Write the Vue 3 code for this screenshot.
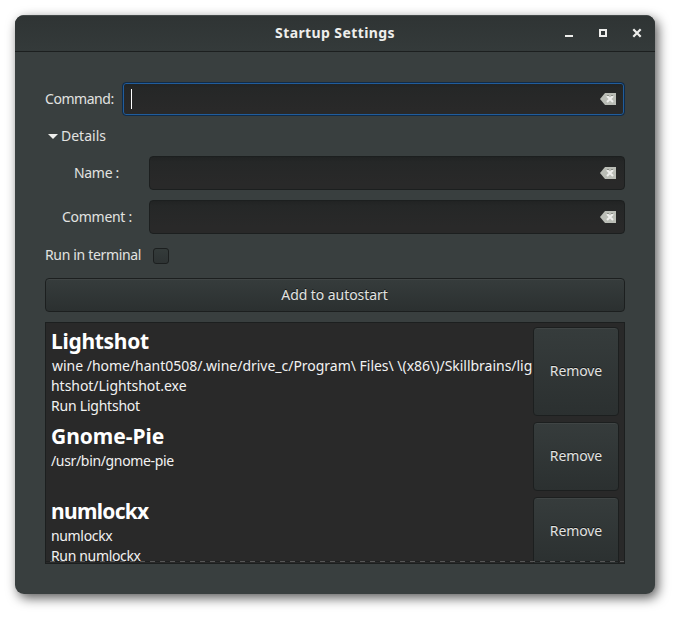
<script setup>
import { ref } from 'vue'

const command = ref('')
const name = ref('')
const comment = ref('')
const terminal = ref(false)

const entries = [
  { id: 'lightshot', title: 'Lightshot', lines: ['wine /home/hant0508/.wine/drive_c/Program\\ Files\\ \\(x86\\)/Skillbrains/lig', 'htshot/Lightshot.exe', 'Run Lightshot'] },
  { id: 'pie', title: 'Gnome-Pie', lines: ['/usr/bin/gnome-pie', ''] },
  { id: 'numlock', title: 'numlockx', lines: ['numlockx', 'Run numlockx'] },
]
</script>

<template>
  <div class="desktop">
    <main class="window">
      <header class="titlebar">
        <h1>Startup Settings</h1>
        <div class="controls">
          <svg viewBox="0 0 10 10"><path d="M1 7h8v2H1z" /></svg>
          <svg viewBox="0 0 10 10"><path fill-rule="evenodd" d="M1 1h8v8H1zM3 3v4h4V3z" /></svg>
          <svg viewBox="0 0 10 10"><path d="M1.3 1.3l7.4 7.4M8.7 1.3L1.3 8.7" fill="none" stroke="#eeeeec" stroke-width="2.2" /></svg>
        </div>
      </header>
      <section class="content">
        <div class="row command">
          <label><span class="t-command">Command:</span></label>
          <div class="entry focused">
            <i class="caret"></i>
            <input v-model="command" type="text" />
            <svg class="clear" viewBox="0 0 16 12"><path d="M5 0h11v12H5L0 6z" fill="#babdb6" /><path d="M7 3l6 6M13 3L7 9" stroke="#eeeeec" stroke-width="2" /><path d="M7 2.5h2M11 2.5h2" stroke="#8b8e88" /></svg>
          </div>
        </div>
        <div class="details">
          <svg viewBox="0 0 10 5"><path d="M0 0h10L5 5z" /></svg>
          <span class="t-details">Details</span>
        </div>
        <div class="row sub">
          <label class="name"><span class="t-name">Name :</span></label>
          <div class="entry">
            <input v-model="name" type="text" />
            <svg class="clear" viewBox="0 0 16 12"><path d="M5 0h11v12H5L0 6z" fill="#babdb6" /><path d="M7 3l6 6M13 3L7 9" stroke="#eeeeec" stroke-width="2" /><path d="M7 2.5h2M11 2.5h2" stroke="#8b8e88" /></svg>
          </div>
        </div>
        <div class="row sub second">
          <label><span class="t-comment">Comment :</span></label>
          <div class="entry">
            <input v-model="comment" type="text" />
            <svg class="clear" viewBox="0 0 16 12"><path d="M5 0h11v12H5L0 6z" fill="#babdb6" /><path d="M7 3l6 6M13 3L7 9" stroke="#eeeeec" stroke-width="2" /><path d="M7 2.5h2M11 2.5h2" stroke="#8b8e88" /></svg>
          </div>
        </div>
        <label class="terminal">
          <span class="t-terminal">Run in terminal</span>
          <input v-model="terminal" type="checkbox" />
        </label>
        <button class="btn add"><span class="t-add">Add to autostart</span></button>
        <div class="list">
          <article v-for="e in entries" :key="e.id" class="item" :class="e.id">
            <div class="info">
              <h2>{{ e.title }}</h2>
              <p v-for="(l, i) in e.lines" :key="i" :class="'line' + i">{{ l }}</p>
            </div>
            <button class="btn remove"><span class="t-remove">Remove</span></button>
          </article>
          <div class="undershoot"></div>
        </div>
      </section>
    </main>
  </div>
</template>

<style>
body { background: #fff; }
</style>

<style scoped>
* { box-sizing: border-box; }
.desktop { width: 680px; height: 619px; padding: 15px; overflow: hidden; font: 14px/20px "Noto Sans", "Open Sans", sans-serif; color: #e2e3e1; white-space: pre; }
.window { width: 640px; height: 579px; border-radius: 9px; background: #393f3f; box-shadow: 3px 4px 12px rgba(0, 0, 0, 0.65); overflow: hidden; }
.titlebar { height: 37px; display: grid; grid-template-columns: 1fr auto 1fr; align-items: center; background: linear-gradient(#2f3434, #343a3a); border-top: 1px solid #434949; border-bottom: 1px solid #1c1f1f; }
h1 { grid-column: 2; margin: 0; padding-bottom: 2px; font-size: 14px; line-height: 20px; font-weight: 700; letter-spacing: 0.4px; color: #eeeeec; }
.controls { display: flex; justify-content: flex-end; gap: 24px; padding: 0 13px 1px 0; }
.controls svg { width: 10px; height: 10px; fill: #eeeeec; }
.content { padding: 30px; }
.row { display: flex; align-items: center; height: 34px; }
.command label { width: 77px; letter-spacing: -0.46px; }
.entry { flex: 1; height: 34px; display: flex; align-items: center; padding: 0 8px; border: 1px solid #1c1f1f; border-radius: 4px; background: linear-gradient(#212323, #252727 5px, #292929 26px); }
.entry.focused { border-color: #102b48; box-shadow: inset 0 0 0 1px #215d9c; }
.entry input { flex: 1; min-width: 0; border: 0; padding: 0; outline: 0; background: transparent; color: inherit; font: inherit; }
.caret { width: 1px; height: 20px; background: #fff; }
.clear { width: 16px; height: 12px; }
.details { height: 20px; margin-top: 10px; display: flex; align-items: center; gap: 3px; padding-left: 3px; }
.details svg { width: 10px; height: 5px; fill: #eeeeec; }
.sub { margin-top: 10px; }
.sub label { width: 104px; text-align: center; letter-spacing: -0.28px; }
.sub .name { padding-right: 1px; }
.terminal { display: flex; align-items: center; height: 24px; margin-top: 10px; }
.terminal span { width: 108px; padding-bottom: 2px; letter-spacing: -0.34px; }
.terminal input { appearance: none; width: 16px; height: 16px; margin: 0; border: 1px solid #1c1f1f; border-radius: 3px; background: linear-gradient(#343b3a, #2e3333); }
.btn { display: block; padding: 0; color: #e2e3e1; font: inherit; text-align: center; text-shadow: 0 -1px #151717; border: 1px solid #1c1f1f; border-radius: 4px; background: linear-gradient(#363c3c, #2b3030); box-shadow: inset 0 1px rgba(255, 255, 255, 0.05); }
.add { width: 100%; height: 34px; margin-top: 10px; padding-right: 1px; letter-spacing: -0.06px; }
.list { position: relative; height: 242px; margin-top: 10px; padding: 4px 5px 0; border: 1px solid #1c1f1f; background: #292929; color: #f2f2f2; overflow: hidden; display: flex; flex-direction: column; gap: 6px; }
.item { flex: none; display: flex; justify-content: space-between; }
.info { width: 482px; }
h2 { margin: 0; font-size: 21px; line-height: 29px; font-weight: 700; color: #fff; letter-spacing: -0.3px; }
.pie h2 { letter-spacing: -0.05px; }
.numlock h2 { letter-spacing: -0.7px; }
p { margin: 0; height: 20px; letter-spacing: -0.34px; }
.lightshot p { letter-spacing: -0.04px; }
.lightshot .line0 { padding-left: 1px; letter-spacing: -0.02px; }
.lightshot .line2 { letter-spacing: -0.22px; }
.remove { width: 86px; flex: none; padding-bottom: 2px; letter-spacing: -0.1px; }
.undershoot { position: absolute; left: 0; right: 0; bottom: 1px; height: 1px; background: repeating-linear-gradient(90deg, #1e2020 0 4px, #575757 4px 9px, #1e2020 9px 10px); }
</style>
